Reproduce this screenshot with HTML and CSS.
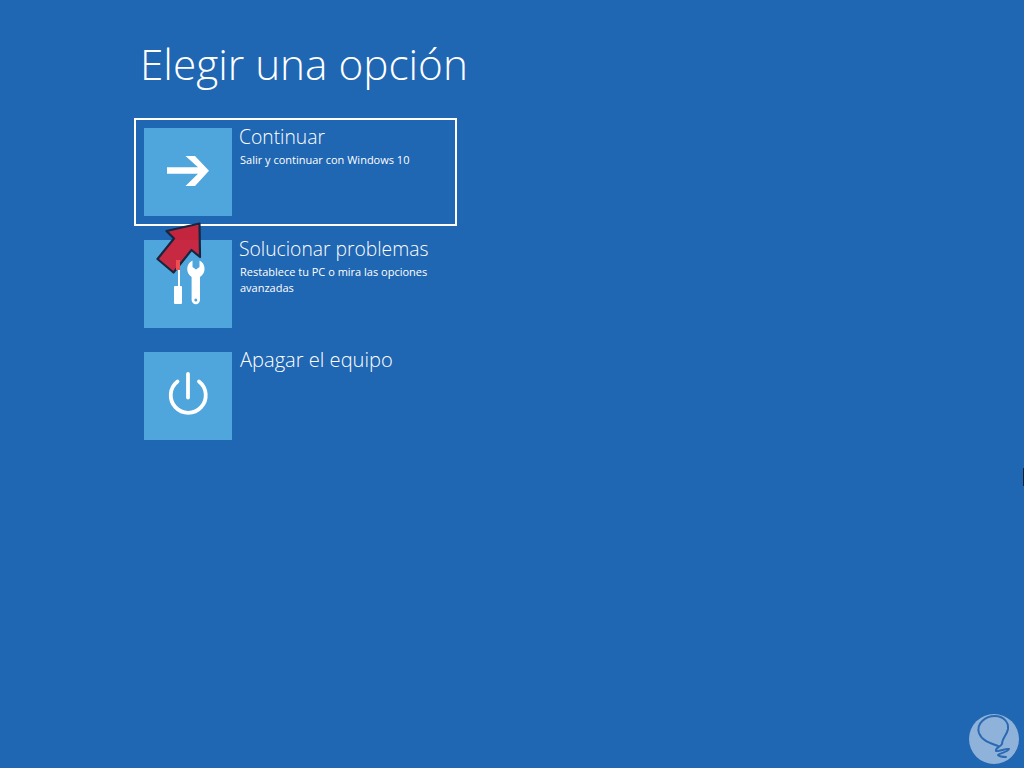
FILE: index.html
```html
<!DOCTYPE html>
<html lang="en">
<head>
    <meta charset="UTF-8">
    <meta name="viewport" content="width=device-width, initial-scale=1.0">
    <title>Elegir una opción</title>
    <link rel="stylesheet" href="styles.css">
</head>
<body>
    <div class="container">
        <h1>Elegir una opción</h1>

        <div class="option-list">
            <div class="option selected">
                <div class="tile">
                    <svg width="88" height="88" viewBox="0 0 88 88">
                        <path d="M23 39.300h31L41.500 28h9.500l14 14.700L51 58h-9.500L54 45.700H23z" fill="#fff"/>
                    </svg>
                </div>
                <div class="option-text">
                    <div class="option-title">Continuar</div>
                    <div class="option-desc">Salir y continuar con Windows 10</div>
                </div>
            </div>

            <div class="option">
                <div class="tile">
                    <svg width="88" height="88" viewBox="0 0 88 88">
                        <path d="M34 28h2v18h-2z" fill="#fff"/>
                        <rect x="30" y="46" width="8" height="18" rx="1" fill="#fff"/>
                        <path d="M48.500 20.500v6.500l3.500 2.500 3.500-2.500v-6.500a9.500 9.500 0 0 1 .5 16.500V60a4.200 4.200 0 0 1-8.400 0V37a9.500 9.500 0 0 1 .9-16.500z" fill="#fff"/>
                        <circle cx="51.800" cy="60" r="1.500" fill="#4ea6dc"/>
                    </svg>
                </div>
                <div class="option-text">
                    <div class="option-title">Solucionar problemas</div>
                    <div class="option-desc">Restablece tu PC o mira las opciones<br>avanzadas</div>
                </div>
            </div>

            <div class="option">
                <div class="tile">
                    <svg width="88" height="88" viewBox="0 0 88 88">
                        <path d="M33.500 29.500a17.500 17.500 0 1 0 21.500 0" fill="none" stroke="#fff" stroke-width="3.800" stroke-linecap="round"/>
                        <path d="M44 22v23.500" stroke="#fff" stroke-width="3.800" stroke-linecap="round"/>
                    </svg>
                </div>
                <div class="option-text">
                    <div class="option-title large">Apagar el equipo</div>
                </div>
            </div>
        </div>
    </div>

    <!-- red pointer drawn on top of the screenshot -->
    <svg class="pointer" width="60" height="64" viewBox="0 0 60 64">
        <path d="M44.500 7.500 11.500 15 19 22.500 2.500 43 18.500 56.500 36.500 34 45 41z" fill="#d01f35" fill-opacity="0.93" stroke="#17263f" stroke-width="2.200" stroke-linejoin="round"/>
        <rect x="21" y="44" width="4" height="10" fill="#ef4f50"/>
    </svg>
    <div class="edge-mark"></div>

    <svg class="watermark" width="52" height="52" viewBox="0 0 52 52">
        <circle cx="26" cy="26" r="25" fill="#8fb2da"/>
        <path d="M30 33C22 30 14 28 11 20 8 10 18 3 27 3c8 0 14 6 13 13-1 6-6 9-6 15-2 3-7 4-6 7 3 1 10-3 13-2-1 3-9 4-11 6 2 2 6 2 8 2" fill="none" stroke="#2b6ab2" stroke-width="2" stroke-linecap="round" stroke-linejoin="round"/>
    </svg>
</body>
</html>
```
FILE: styles.css
```css
* {
    margin: 0;
    padding: 0;
    box-sizing: border-box;
}

html, body {
    height: 100%;
}

body {
    font-family: "Open Sans", "Liberation Sans", sans-serif;
    background-color: #1f66b3;
    color: white;
    overflow: hidden;
}

.container {
    padding: 35px 0 0 134px;
}

h1 {
    font-size: 42.300px;
    font-weight: 300;
    line-height: 58px;
    margin-left: 6px;
    margin-bottom: 25px;
}

.option-list {
    display: flex;
    flex-direction: column;
    gap: 4px;
}

.option {
    display: flex;
    width: 323px;
    height: 108px;
    padding: 8px;
    border: 2px solid transparent;
}

.option.selected {
    border-color: white;
}

.tile {
    width: 88px;
    height: 88px;
    flex-shrink: 0;
    background: #4ea6dc;
}

.tile svg {
    display: block;
}

.option-text {
    margin: -4px 0 0 7px;
    font-weight: 300;
}

.option-title {
    font-size: 19.300px;
    line-height: 26px;
    margin-bottom: 2px;
}

.option-title.large {
    font-size: 20.100px;
    line-height: 26px;
    margin-top: -1px;
    margin-left: 1px;
}

.option-desc {
    font-size: 11px;
    font-weight: 400;
    line-height: 16px;
    margin-left: 1px;
}

.pointer {
    position: absolute;
    left: 155px;
    top: 216px;
}

.edge-mark {
    position: absolute;
    left: 1023px;
    top: 468px;
    width: 1px;
    height: 18px;
    background: #10213a;
}

.watermark {
    position: absolute;
    left: 968px;
    top: 713px;
}
```
